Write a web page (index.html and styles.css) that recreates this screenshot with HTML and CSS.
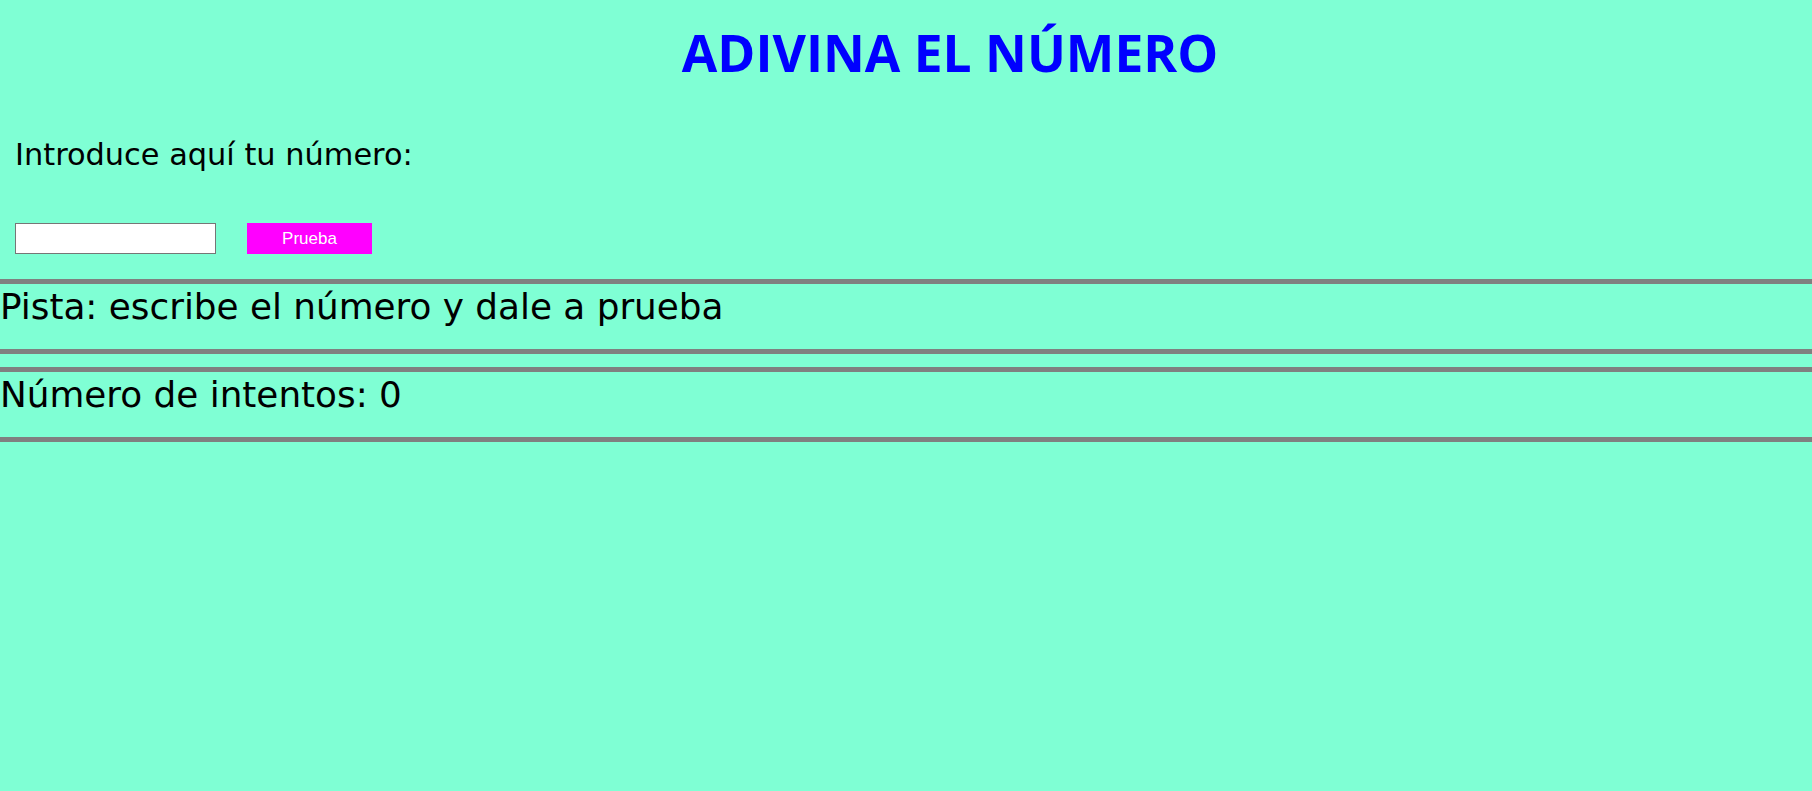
FILE: index.html
```html
<!DOCTYPE html>
<html lang="es">
<head>
<meta charset="utf-8">
<title>Adivina el número</title>
<link rel="stylesheet" href="styles.css">
</head>
<body>
<h1 class="title">ADIVINA EL NÚMERO</h1>
<div class="form">
  <p class="label">Introduce aquí tu número:</p>
  <div class="controls">
    <input class="guess" type="text">
    <button class="try" type="button">Prueba</button>
  </div>
</div>
<div class="panel panel-hint"><p class="panel-text">Pista: escribe el número y dale a prueba</p></div>
<div class="panel"><p class="panel-text">Número de intentos: 0</p></div>
</body>
</html>
```
FILE: styles.css
```css
html, body {
  margin: 0;
  padding: 0;
  background: #7fffd4;
}
body {
  font-family: "DejaVu Sans", sans-serif;
  color: #000;
}
.title {
  margin: 26px 0 0;
  padding-left: 88px;
  font-family: "Open Sans", sans-serif;
  font-weight: 700;
  font-size: 51.5px;
  line-height: 52px;
  text-align: center;
  color: #0000ff;
}
.form {
  padding-left: 15px;
}
.label {
  margin: 62px 0 0;
  font-size: 30.4px;
  line-height: 30px;
}
.controls {
  display: flex;
  gap: 31px;
  margin-top: 53px;
}
.guess {
  box-sizing: border-box;
  width: 201px;
  height: 31px;
  margin: 0;
  border: 1px solid #767676;
  background: #fff;
  padding: 0 4px;
}
.try {
  box-sizing: border-box;
  width: 125px;
  height: 31px;
  margin: 0;
  border: none;
  background: #ff00ff;
  color: #fff;
  font-family: "Liberation Sans", Arial, sans-serif;
  font-size: 17px;
  padding: 0;
}
.panel {
  border-top: 5px solid #808080;
  border-bottom: 5px solid #808080;
  height: 62px;
  padding-top: 3px;
}
.panel-hint {
  margin-top: 25px;
  margin-bottom: 13px;
}
.panel-text {
  margin: 0;
  font-size: 35.8px;
  line-height: 40px;
}
```
